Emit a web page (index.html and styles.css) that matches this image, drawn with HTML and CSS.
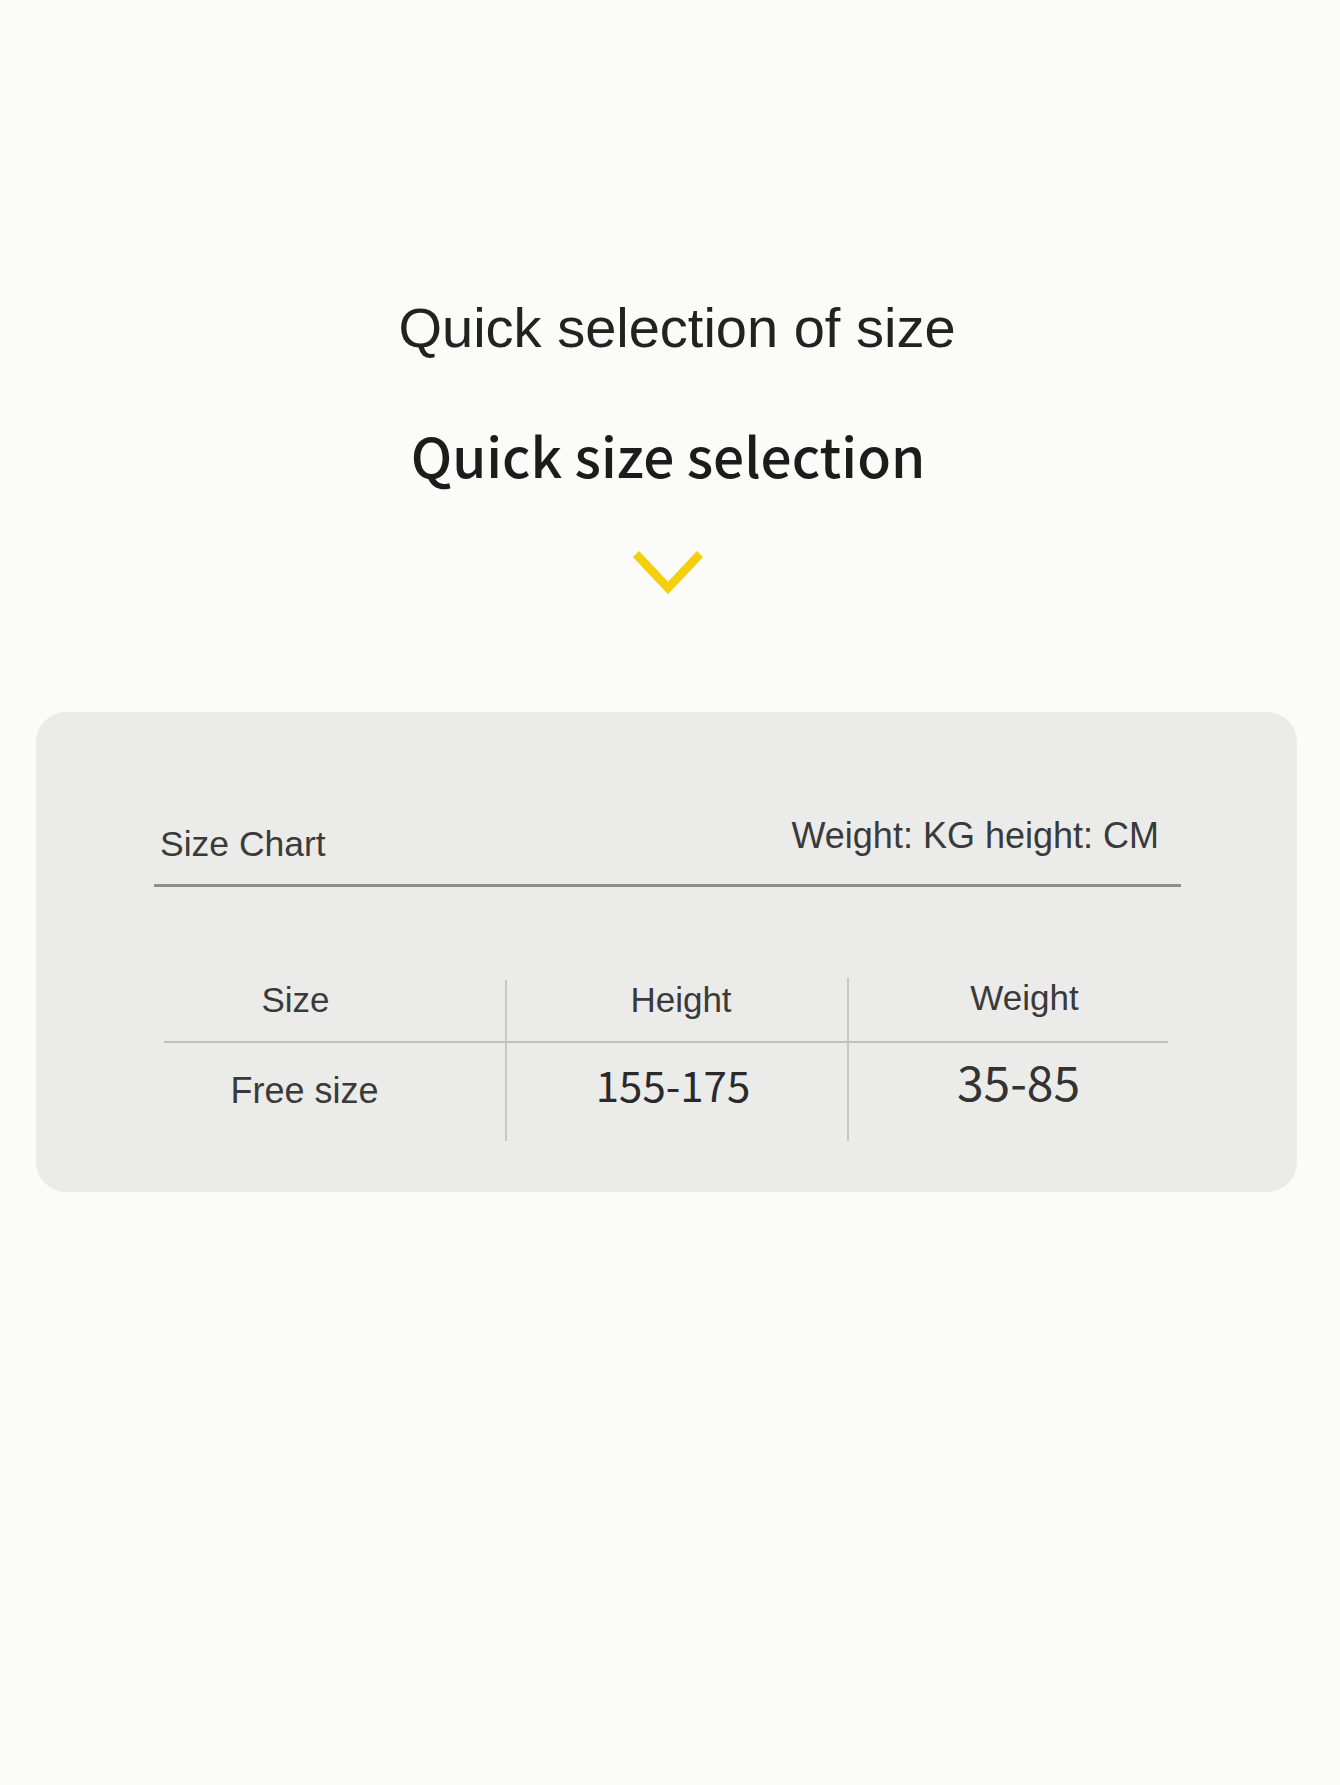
FILE: index.html
```html
<!DOCTYPE html>
<html lang="en">
<head>
<meta charset="utf-8">
<title>Quick size selection</title>
<link rel="stylesheet" href="styles.css">
</head>
<body>
<main class="page">
  <h1 class="title-main">Quick selection of size</h1>
  <h2 class="title-sub">Quick size selection</h2>
  <div class="chevron">
    <svg width="74" height="46" viewBox="0 0 74 46" aria-hidden="true">
      <polyline points="5,4 37,38 69,4" fill="none" stroke="#f4cf0c" stroke-width="8.5" stroke-linejoin="miter"/>
    </svg>
  </div>
  <section class="card">
    <div class="card-head">
      <span class="chart-label">Size Chart</span>
      <span class="unit-label">Weight: KG height: CM</span>
    </div>
    <div class="size-table">
      <div class="cell head col1">Size</div>
      <div class="cell head col2">Height</div>
      <div class="cell head col3 head-weight">Weight</div>
      <div class="cell body col1 free">Free size</div>
      <div class="cell body col2 num-height">155-175</div>
      <div class="cell body col3 num-weight">35-85</div>
    </div>
  </section>
</main>
</body>
</html>
```

FILE: styles.css
```css
html, body {
  margin: 0;
  padding: 0;
  background: #fbfbfa;
}

.page {
  width: 1340px;
  height: 1785px;
  display: flex;
  flex-direction: column;
  align-items: stretch;
}

.title-main {
  margin: 296px 0 0 0;
  padding-left: 14px;
  text-align: center;
  font-family: "Liberation Sans", Arial, sans-serif;
  font-weight: 400;
  font-size: 56px;
  line-height: 64px;
  color: #222222;
}

.title-sub {
  margin: 64px 0 0 0;
  padding-right: 4px;
  text-align: center;
  font-family: "Noto Sans CJK JP", "Noto Sans", sans-serif;
  font-weight: 500;
  font-size: 55px;
  line-height: 60px;
  color: #1c1c1c;
}

.chevron {
  display: flex;
  justify-content: center;
  margin-top: 66px;
  padding-right: 5px;
  height: 46px;
}

.card {
  margin: 116px 0 0 36px;
  width: 1261px;
  height: 480px;
  box-sizing: border-box;
  background: #ebebea;
  border-radius: 30px;
  padding-top: 104px;
  font-family: "Liberation Sans", Arial, sans-serif;
  color: #3a3a3a;
}

.card-head {
  margin: 0 116px 0 118px;
  display: flex;
  justify-content: space-between;
  align-items: flex-start;
  padding-bottom: 20px;
  border-bottom: 3px solid #8e8e8e;
}

.chart-label {
  margin-top: 8px;
  padding-left: 6px;
  font-size: 35.5px;
  line-height: 40px;
}

.unit-label {
  padding-right: 22px;
  font-size: 36px;
  line-height: 40px;
}

.size-table {
  margin: 93px 0 0 128px;
  width: 1004px;
  display: grid;
  grid-template-columns: 341px 342px 321px;
  grid-template-rows: 63px 98px;
}

.cell {
  box-sizing: border-box;
  text-align: center;
  font-size: 35px;
  line-height: 40px;
}

.head {
  border-bottom: 2px solid #c0c0c0;
}

.col2, .col3 {
  border-left: 2px solid #c6c6c6;
}

.col1 {
  padding-right: 78px;
}

.col2 {
  padding-left: 8px;
}

.col3 {
  padding-left: 32px;
}

.head-weight {
  margin-top: -2px;
}

.free {
  padding-top: 28px;
  padding-right: 60px;
  font-size: 36px;
}

.num-height {
  padding-top: 16px;
  padding-left: 0;
  padding-right: 8px;
  font-family: "Noto Sans CJK JP", "Noto Sans", sans-serif;
  font-size: 42px;
  line-height: 50px;
  color: #2a2a2a;
}

.num-weight {
  padding-top: 12px;
  padding-left: 20px;
  font-family: "Noto Sans CJK JP", "Noto Sans", sans-serif;
  font-size: 48px;
  line-height: 50px;
  color: #333333;
}
```
